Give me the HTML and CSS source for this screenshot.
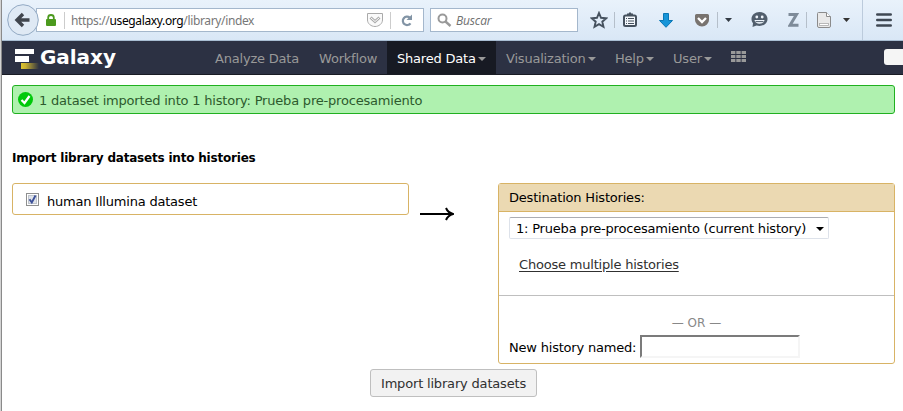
FILE: index.html
```html
<!DOCTYPE html>
<html lang="es">
<head>
<meta charset="utf-8">
<title>Galaxy</title>
<link rel="stylesheet" href="styles.css">
</head>
<body>
<div class="window">
  <header class="toolbar">
    <div class="back"><svg width="32" height="32" viewBox="0 0 32 32"><circle cx="16" cy="16" r="15.3" fill="#dfe9f4" stroke="#92a9c3"/><path d="M16 10l-6 6 6 6M10.500 16H22.500" fill="none" stroke="#40454d" stroke-width="3.400"/></svg></div>
    <div class="urlbar">
      <svg class="lock" width="10" height="12" viewBox="0 0 10 12"><path d="M2.200 6V3.500a2.800 2.500 0 0 1 5.600 0V6" fill="none" stroke="#4c9a1e" stroke-width="1.800"/><rect y="5" width="10" height="7" rx="1" fill="#4c9a1e"/></svg>
      <i class="divider"></i>
      <span class="url">https://<b>usegalaxy.org</b>/library/index</span>
      <svg class="reader" width="16" height="14" viewBox="0 0 16 14"><path d="M.5.500h15v6.500c0 3.500-3.500 6.500-7.500 6.500S.5 10.500.5 7z" fill="#fafafa" stroke="#aaa"/><path d="M3.500 4.500L8 8.500l4.500-4" fill="none" stroke="#aaa" stroke-width="3"/><path d="M3.800 4.800L8 8.500l4.200-3.700" fill="none" stroke="#fff"/></svg>
      <i class="divider"></i>
      <svg class="reload" width="12" height="13" viewBox="0 0 12 13"><path d="M8.800 3.700A4.200 4.200 0 1 0 9.500 9.300" fill="none" stroke="#8294a5" stroke-width="2.200"/><path d="M11 .5v5.500H5.500z" fill="#8294a5"/></svg>
    </div>
    <div class="search">
      <svg width="15" height="15" viewBox="0 0 15 15"><circle cx="5.500" cy="5.500" r="4" fill="none" stroke="#999" stroke-width="2"/><path d="M8.500 8.500l5 4.500" stroke="#999" stroke-width="2.400"/></svg>
      <span>Buscar</span>
    </div>
    <div class="tools">
      <svg class="star" width="18" height="18" viewBox="0 0 18 18"><path d="M9 2l2 4.800 5.300.4-4 3.500 1.200 5.100L9 13.100l-4.500 2.700 1.200-5.100-4-3.500L7 6.800z" fill="none" stroke="#46525f" stroke-width="1.900"/></svg>
      <i class="split s1"></i>
      <svg class="list" width="16" height="16" viewBox="0 0 16 16"><rect x="2" y="3.500" width="12" height="10.500" rx="1.500" fill="#f4f8fc" stroke="#46525f" stroke-width="2"/><path d="M5 3.500V1.500h1.500L8 0l1.500 1.500H11v2z" fill="#46525f"/><path d="M4 6.500h1m1 0h6M4 9h1m1 0h6M4 11.500h1m1 0h6" stroke="#46525f" stroke-width="1.200"/></svg>
      <svg class="down" width="14" height="15" viewBox="0 0 14 15"><path d="M4.500.5h5v7h4L7 14.300.5 7.500h4z" fill="#1795d8" stroke="#0876b5"/></svg>
      <svg class="pocket" width="14" height="13" viewBox="0 0 14 13"><path d="M1.500 0h11A1.500 1.500 0 0 1 14 1.500V6A7 6.500 0 0 1 0 6V1.500A1.500 1.500 0 0 1 1.500 0z" fill="#78736f"/><path d="M3 4l4 4 4-4" fill="none" stroke="#fff" stroke-width="2.300"/></svg>
      <i class="split s2"></i>
      <svg class="drop d1" width="7" height="4" viewBox="0 0 7 4"><path d="M0 0h7L3.500 4z" fill="#333b44"/></svg>
      <svg class="chat" width="17" height="16" viewBox="0 0 17 16"><path d="M8.500 0C13 0 16.500 3 16.500 7s-3.500 7-8 7c-1 0-2-.2-3-.5L1.500 15 2 11.200C1 10 .5 8.700.5 7c0-4 3.500-7 8-7z" fill="#515e6c"/><circle cx="5.800" cy="5" r="1.400" fill="#edf3fa"/><circle cx="11.200" cy="5" r="1.400" fill="#edf3fa"/><path d="M3.500 8h10c-.5 5-9.500 5-10 0z" fill="#edf3fa"/><path d="M4.500 9.600h8" stroke="#515e6c"/></svg>
      <svg class="zed" width="11" height="14" viewBox="0 0 11 14"><path d="M.5 1.500h8L2 12.300h8.500" fill="none" stroke="#7e8b99" stroke-width="3"/></svg>
      <i class="split s3"></i>
      <svg class="page" width="14" height="16" viewBox="0 0 14 16"><path d="M1.500.5h8l4 4v9.500a1.500 1.500 0 0 1-1.500 1.500H2a1.500 1.500 0 0 1-1.500-1.500v-12a1 1 0 0 1 1-1.500z" fill="#e9e9e9" stroke="#8b8b8b"/><path d="M9.500.5v4h4" fill="#fff" stroke="#8b8b8b"/><rect x="2.500" y="11.500" width="9" height="2" fill="#fff" stroke="#aaa" stroke-width=".8"/></svg>
      <svg class="drop d2" width="7" height="4" viewBox="0 0 7 4"><path d="M0 0h7L3.500 4z" fill="#333"/></svg>
      <i class="longsplit"></i>
      <svg class="menu" width="16" height="14" viewBox="0 0 16 14"><path d="M1.300 1.500h13.400M1.300 7h13.400M1.300 12.500h13.400" stroke="#3f4853" stroke-width="2.600" stroke-linecap="round"/></svg>
    </div>
  </header>
  <nav class="masthead">
    <div class="brand">
      <svg width="26" height="22" viewBox="0 0 26 22"><defs><linearGradient id="gold"><stop offset="0" stop-color="#dcc432"/><stop offset=".25" stop-color="#c9b02f"/><stop offset="1" stop-color="#2c3143"/></linearGradient></defs><path d="M0 1h19v5H0zM0 8h14v6H0z" fill="#fff"/><rect x="6" y="15" width="18" height="6" fill="url(#gold)"/></svg>
      <span>Galaxy</span>
    </div>
    <a class="item analyze">Analyze Data</a>
    <a class="item workflow">Workflow</a>
    <a class="item wide active">Shared Data<i class="caret"></i></a>
    <a class="item wide">Visualization<i class="caret"></i></a>
    <a class="item short">Help<i class="caret"></i></a>
    <a class="item short">User<i class="caret"></i></a>
    <svg class="apps" width="15" height="11" viewBox="0 0 15 11"><path d="M0 1.500h15M0 5.500h15M0 9.500h15" stroke="#999" stroke-width="3" stroke-dasharray="4.400 .9"/></svg>
    <div class="quota"></div>
  </nav>
  <main>
    <div class="alert">
      <svg width="15" height="15" viewBox="0 0 15 15"><circle cx="7.500" cy="7.500" r="7.500" fill="#00c90a"/><path d="M3.500 8l3 3 5-7" fill="none" stroke="#fff" stroke-width="2.300"/></svg>
      <span>1 dataset imported into 1 history: Prueba pre-procesamiento</span>
    </div>
    <h1><span>Import library datasets into histories</span></h1>
    <div class="columns">
      <div class="source">
        <span class="check"><svg width="13" height="13" viewBox="0 0 13 13"><rect x=".5" y=".5" width="12" height="12" fill="#fff" stroke="#8e8f8f"/><rect x="2.500" y="2.500" width="8" height="8" fill="#dfe3e9" stroke="#bfc4cc"/><path d="M3.500 6.200l2.300 3.300L9.500 2.500" fill="none" stroke="#3c5099" stroke-width="1.900"/></svg></span>
        <label>human Illumina dataset</label>
      </div>
      <svg class="arrow" width="34" height="14" viewBox="0 0 34 14"><path d="M0 7h32" stroke="#000" stroke-width="2"/><path d="M26 1c1.500 3.500 3.500 5 7 6-3.500 1-5.500 2.500-7 6" fill="none" stroke="#000" stroke-width="2"/></svg>
      <section class="destination">
        <div class="heading">Destination Histories:</div>
        <div class="pick">
          <div class="select"><span>1: Prueba pre-procesamiento (current history)</span><svg width="8" height="4" viewBox="0 0 8 4"><path d="M0 0h8L4 4z"/></svg></div>
          <a class="multiple">Choose multiple histories</a>
        </div>
        <div class="create">
          <div class="or">— OR —</div>
          <div class="named"><label>New history named:</label><input type="text"></div>
        </div>
      </section>
    </div>
    <button>Import library datasets</button>
  </main>
</div>
</body>
</html>
```
FILE: styles.css
```css
* { box-sizing: border-box; }
body {
  margin: 0;
  background: #fff;
  font: 13px/18px Verdana, "DejaVu Sans", sans-serif;
  letter-spacing: -0.2px;
  color: #000;
  white-space: nowrap;
  overflow: hidden;
}
svg { display: block; flex: none; }
.window {
  height: 411px;
  padding-left: 2px;
  background: linear-gradient(90deg, #d3d3d3 1px, #8a8a8a 1px, #8a8a8a 2px, #fff 2px);
}

.toolbar {
  display: flex;
  height: 41px;
  background: linear-gradient(#e9f2fb, #d9e7f6);
  border-bottom: 1px solid #a8bdd2;
}
.back { width: 32px; margin: 4px 0 0 5px; z-index: 1; }
.urlbar {
  display: flex;
  align-items: center;
  width: 388px;
  height: 24px;
  margin: 8px 0 0 -3px;
  padding-left: 9px;
  border: 1px solid #a4b7cc;
  background: #fff;
}
.lock { margin-top: -1px; }
.divider { width: 1px; height: 17px; background: #ccc; }
.lock + .divider { margin-left: 8px; }
.url {
  width: 296px;
  margin: 1px 0 0 6px;
  font: 12px/16px "Noto Sans", sans-serif;
  letter-spacing: -0.36px;
  color: #777;
}
.url b { font-weight: 400; color: #000; }
.reader { margin-right: 7px; }
.reload { margin-left: 10px; }
.search {
  display: flex;
  align-items: center;
  width: 148px;
  height: 24px;
  margin: 8px 0 0 6px;
  padding-left: 6px;
  border: 1px solid #a4b7cc;
  background: #fff;
  font: italic 12px/16px "Open Sans", sans-serif;
  color: #707070;
}
.search span { margin: 1px 0 0 4px; letter-spacing: -0.15px; }
.tools { display: flex; align-items: center; height: 40px; }
.star { margin-left: 12px; }
.split { width: 1px; height: 16px; background: #b5bfca; }
.s1 { margin-left: 6px; }
.list { margin-left: 7px; margin-top: -1px; }
.down { margin-left: 21px; }
.pocket { margin-left: 22px; }
.s2 { margin-left: 8px; }
.d1 { margin-left: 7px; }
.chat { margin-left: 19px; }
.zed { margin-left: 20px; }
.s3 { margin-left: 7px; }
.page { margin-left: 10px; }
.d2 { margin-left: 12px; }
.longsplit { width: 1px; height: 40px; margin-left: 12px; background: #bccbdc; }
.menu { margin-left: 13px; margin-top: -1px; }

.masthead {
  display: flex;
  align-items: stretch;
  height: 34px;
  background: #2c3143;
  border-bottom: 1px solid #191b24;
}
.brand {
  display: flex;
  width: 203px;
  padding: 7px 0 0 13px;
  color: #fff;
  font-weight: 700;
  font-size: 20px;
}
.brand span { margin-left: -1px; letter-spacing: -0.05px; }
.item {
  display: flex;
  align-items: center;
  padding: 3px 0 0 10px;
  color: #999;
}
.analyze { width: 104px; }
.workflow { width: 78px; }
.wide { width: 109px; }
.short { width: 58px; }
.active { background: #171a23; color: #fff; }
.caret { margin: 0 0 0 2px; border: 4px solid transparent; border-top-color: #999; border-bottom: 0; }
.apps { margin: 10px 0 0 10px; }
.quota { width: 19px; height: 16px; margin: 8px 0 0 auto; border-radius: 3px 0 0 3px; background: #f5f5f5; }

main { padding: 10px 8px 0 10px; }
.alert {
  display: flex;
  align-items: center;
  height: 29px;
  padding: 0 0 0 5px;
  border: 1px solid #20b020;
  border-radius: 3px;
  background: #aff1af;
  color: #2d5a2d;
}
.alert svg { margin: -1px 6px 0 0; }
.alert span { margin-top: 2px; }
h1 { margin: 35px 0 16px; font-size: 12px; line-height: 18px; }
.columns { display: flex; align-items: flex-start; }
.source {
  display: flex;
  align-items: center;
  width: 397px;
  height: 32px;
  padding: 2px 0 0 13px;
  border: 1px solid #d8b365;
  border-radius: 3px;
}
.check { margin-top: -2px; }
.source label { margin: 3px 0 0 8px; }
.arrow { margin: 24px 0 0 11px; }
.destination {
  width: 397px;
  height: 181px;
  margin-left: auto;
  border: 1px solid #d8b365;
  border-radius: 3px;
}
.heading { height: 28px; padding: 5px 0 0 10px; background: #ebd9b2; border-bottom: 1px solid #d8b365; }
.pick { height: 84px; padding: 5px 10px 0; border-bottom: 1px solid #bfbfbf; }
.select {
  display: flex;
  align-items: center;
  justify-content: space-between;
  width: 320px;
  height: 22px;
  padding: 1px 4px 0 6px;
  border: 1px solid #dde2ea;
  border-top-color: #abadb3;
  border-radius: 2px;
}
.multiple { display: inline-block; margin: 17px 0 0 10px; color: #303030; text-decoration: underline; text-underline-offset: 2px; }
.create { padding: 18px 10px 0; }
.or { text-align: center; font-size: 12px; letter-spacing: 0; color: #888; }
.named { display: flex; align-items: center; margin-top: 3px; }
.named label { margin-top: 2px; width: 131px; }
input { width: 160px; height: 23px; border: 2px solid; border-color: #7b7b7b #f5f5f5 #f5f5f5 #7b7b7b; background: #fff; }
button {
  display: block;
  width: 167px;
  height: 28px;
  margin: 5px 0 0 358px;
  padding: 1px 0 0;
  border: 1px solid #bfbfbf;
  border-radius: 3px;
  background: #f2f2f2;
  color: #303030;
  font: 13px/18px Verdana, "DejaVu Sans", sans-serif;
  letter-spacing: -0.18px;
}
```
